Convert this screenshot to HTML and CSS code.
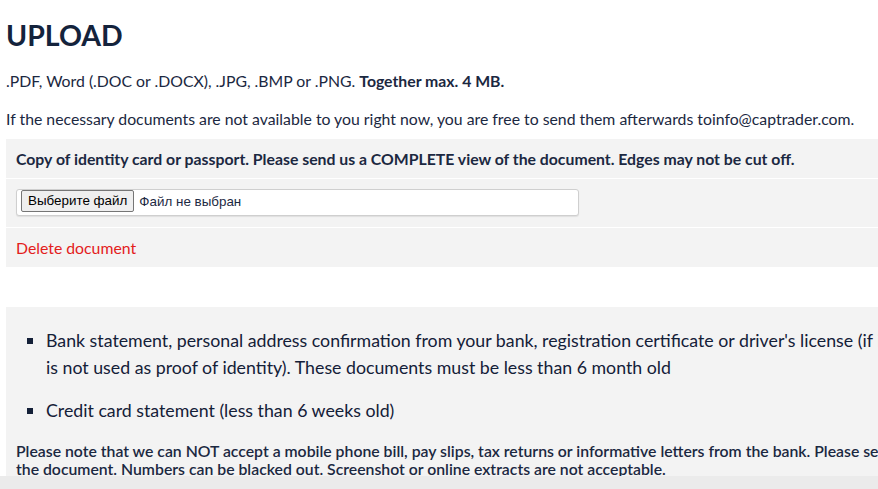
FILE: index.html
```html
<!DOCTYPE html>
<html lang="en">
<head>
    <meta charset="UTF-8">
    <meta name="viewport" content="width=device-width, initial-scale=1.0">
    <title>Upload</title>
    <link rel="stylesheet" href="styles.css">
</head>
<body>
    <main class="page">
        <h1 class="title">UPLOAD</h1>
        <p class="note">.PDF, Word (.DOC or .DOCX), .JPG, .BMP or .PNG. <b>Together max. 4 MB.</b></p>
        <p class="note">If the necessary documents are not available to you right now, you are free to send them afterwards toinfo@captrader.com.</p>

        <div class="doc-box">
            <div class="doc-head">Copy of identity card or passport. Please send us a COMPLETE view of the document. Edges may not be cut off.</div>
            <div class="doc-row">
                <label class="file-field">
                    <span class="file-btn">Выберите файл</span>
                    <span class="file-name">Файл не выбран</span>
                </label>
            </div>
            <div class="doc-row doc-last">
                <a class="delete" href="#">Delete document</a>
            </div>
        </div>

        <div class="info-box">
            <ul class="info-list">
                <li>Bank statement, personal address confirmation from your bank, registration certificate or driver's license (if it is not used as proof of identity). These documents must be less than 6 month old</li>
                <li>Credit card statement (less than 6 weeks old)</li>
            </ul>
            <p class="info-note">Please note that we can NOT accept a mobile phone bill, pay slips, tax returns or informative letters from the bank. Please send us a complete copy of the document. Numbers can be blacked out. Screenshot or online extracts are not acceptable.</p>
        </div>
    </main>
    <div class="scroll-bar"></div>
</body>
</html>
```

FILE: styles.css
```css
html, body{
    margin: 0;
    overflow: hidden;
}
body{
    font-family: Lato, "Open Sans", sans-serif;
    color: #1b2841;
    background: #ffffff;
}
.page{
    width: 1200px;
    padding: 0 6px;
}
.title{
    margin: 0;
    padding-top: 18px;
    font-size: 28.5px;
    line-height: 34px;
    font-weight: 700;
    color: #14233c;
}
.note{
    margin: 20px 0 0;
    font-size: 15.8px;
    line-height: 18px;
}
.note b{
    font-weight: 700;
}

.doc-box{
    margin-top: 11px;
    width: 1000px;
    background: #f3f3f3;
}
.doc-head{
    padding: 11px 10px 10px;
    font-size: 15.8px;
    line-height: 18px;
    font-weight: 700;
    border-bottom: 1px solid #ffffff;
}
.doc-row{
    padding: 10px 10px 11px;
    border-bottom: 1px solid #ffffff;
}
.doc-last{
    border-bottom: none;
    padding: 11px 10px 10px;
}
.file-field{
    display: flex;
    align-items: center;
    gap: 5px;
    box-sizing: border-box;
    width: 563px;
    height: 27px;
    padding: 0 4px 3px;
    background: #ffffff;
    border: 1px solid #cfcfcf;
    border-radius: 3px;
    box-shadow: 0 1px 1px rgba(0,0,0,0.08);
    font-family: "Liberation Sans", Arial, sans-serif;
    font-size: 13.4px;
}
.file-btn{
    box-sizing: border-box;
    height: 22px;
    line-height: 20px;
    padding: 0 6px;
    background: #efefef;
    border: 1px solid #767676;
    border-radius: 2px;
    color: #000000;
}
.file-name{
    color: #1d2a43;
}
.delete{
    display: block;
    font-size: 15.8px;
    line-height: 18px;
    color: #e3201b;
    text-decoration: none;
}

.info-box{
    margin-top: 40px;
    width: 1060px;
    padding: 20px 10px 20px;
    background: #f3f3f3;
}
.info-list{
    width: 858px;
    margin: 0;
    padding-left: 30px;
    list-style: square;
    font-size: 17.75px;
    line-height: 27px;
    color: #142038;
}
.info-list li{
    margin-bottom: 16px;
}
.info-note{
    margin: 0;
    padding-top: 2px;
    font-size: 15.8px;
    line-height: 18px;
    font-weight: 600;
}
.scroll-bar{
    position: fixed;
    left: 0;
    right: 0;
    bottom: 0;
    height: 13px;
    background: #ebebeb;
}
```
